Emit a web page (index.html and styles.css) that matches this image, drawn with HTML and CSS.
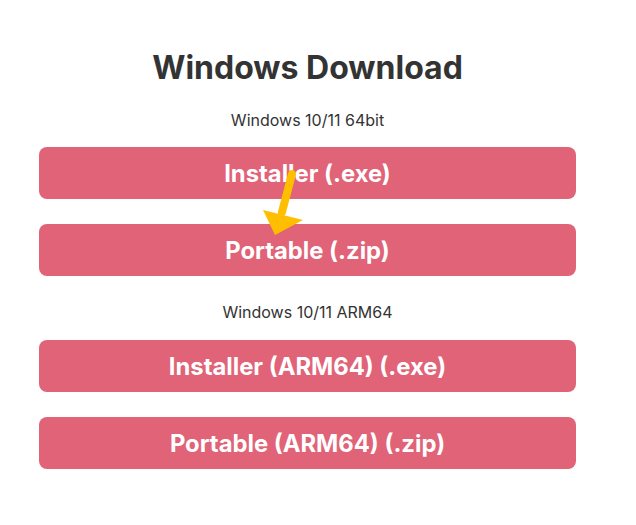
FILE: index.html
```html
<!DOCTYPE html>
<html>
<head>
<meta charset="utf-8">
<link rel="stylesheet" href="styles.css">
</head>
<body>
<main class="page">
  <h1 class="title">Windows Download</h1>
  <p class="label label-first">Windows 10/11 64bit</p>
  <div class="group">
    <a class="btn" href="#">Installer (.exe)</a>
    <a class="btn" href="#">Portable (.zip)</a>
    <svg class="arrow" width="60" height="80" viewBox="0 0 60 80">
      <line x1="42" y1="14" x2="32" y2="52" stroke="#FFBF00" stroke-width="8" stroke-linecap="round"/>
      <polygon points="13,50 53,60 25,75" fill="#FFBF00"/>
    </svg>
  </div>
  <p class="label">Windows 10/11 ARM64</p>
  <div class="group">
    <a class="btn" href="#">Installer (ARM64) (.exe)</a>
    <a class="btn" href="#">Portable (ARM64) (.zip)</a>
  </div>
</main>
</body>
</html>
```
FILE: styles.css
```css
* { box-sizing: border-box; }
html, body { margin: 0; padding: 0; background: #fff; }
body { font-family: Inter, "Noto Sans", sans-serif; color: #333; }
.page {
  width: 537px;
  margin-left: 39px;
  padding-top: 49px;
  display: flex;
  flex-direction: column;
  align-items: stretch;
}
.title {
  margin: 0;
  font-size: 32px;
  font-weight: 700;
  line-height: 38px;
  text-align: center;
  color: #333;
}
.label {
  margin: 26px 0 0;
  font-size: 16px;
  line-height: 20px;
  text-align: center;
  color: #333;
}
.label-first { margin-top: 23px; }
.group {
  position: relative;
  display: flex;
  flex-direction: column;
  gap: 25px;
  margin-top: 17px;
}
.label:not(.label-first) + .group { margin-top: 18px; }
.btn {
  display: flex;
  align-items: center;
  justify-content: center;
  height: 52px;
  border-radius: 8px;
  background: #E06377;
  color: #fff;
  font-size: 23.8px;
  font-weight: 700;
  text-decoration: none;
}
.arrow {
  position: absolute;
  left: 211px;
  top: 13px;
}
```
